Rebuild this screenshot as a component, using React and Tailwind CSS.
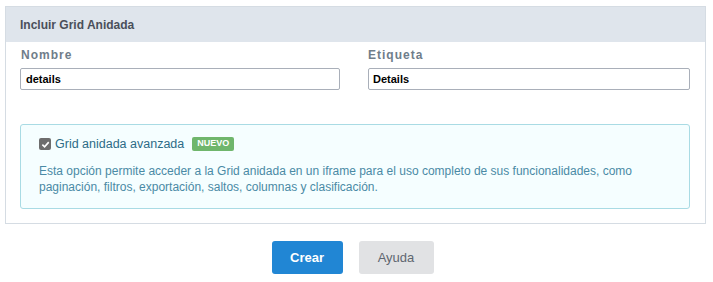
export default function App() {
  return (
    <div className="min-h-screen bg-white pt-[6px] px-[5px] font-['Liberation_Sans',Arial,sans-serif]">
      {/* panel */}
      <div className="w-[701px] border border-[#d5dce3]">
        <div className="h-[35px] bg-[#dfe5ec] flex items-center pl-[14px]">
          <h1 className="text-[12px] font-bold text-[#4a4f5a]">Incluir Grid Anidada</h1>
        </div>

        <div className="px-[14px] pt-[6px] pb-[14px]">
          <div className="flex gap-[28px]">
            <div className="w-[320px]">
              <label className="block text-[12px] font-bold tracking-[1px] text-[#6f7d8a] leading-[14px] ml-px">Nombre</label>
              <input
                defaultValue="details"
                className="mt-[6px] w-[320px] h-[22px] border border-[#a9afb9] rounded-[2px] px-[5px] text-[11px] font-bold text-black outline-none"
              />
            </div>
            <div className="w-[322px]">
              <label className="block text-[12px] font-bold tracking-[1px] text-[#6f7d8a] leading-[14px]">Etiqueta</label>
              <input
                defaultValue="Details"
                className="mt-[6px] w-[322px] h-[22px] border border-[#a9afb9] rounded-[2px] px-[4px] text-[11px] font-bold text-black outline-none"
              />
            </div>
          </div>

          {/* info box */}
          <div className="mt-[34px] w-[670px] bg-[#f5feff] border border-[#a9dbe4] rounded-[3px] pl-[18px] pr-4 pt-[11px] pb-[13px]">
            <div className="flex items-center">
              <span className="w-[12px] h-[12px] rounded-[2px] bg-[#6d6d6d] flex items-center justify-center">
                <svg width="9" height="9" viewBox="0 0 10 10">
                  <path d="M1.5 5.2 L4 7.6 L8.6 2.4" fill="none" stroke="white" strokeWidth="1.8" />
                </svg>
              </span>
              <span className="ml-[4px] text-[12.5px] text-[#2d6c87] leading-[16px]">Grid anidada avanzada</span>
              <span className="ml-[8px] bg-[#6fb66c] text-white text-[9px] font-bold px-[5px] h-[14px] flex items-center rounded-[2px]">NUEVO</span>
            </div>
            <p className="mt-[11px] text-[12px] leading-[16px] text-[#4a8aa5]">
              Esta opción permite acceder a la Grid anidada en un iframe para el uso completo de sus funcionalidades, como paginación, filtros, exportación, saltos, columnas y clasificación.
            </p>
          </div>
        </div>
      </div>

      {/* buttons */}
      <div className="flex justify-center gap-[16px] mt-[17px] ml-[-8px]">
        <button className="w-[71px] h-[33px] rounded-[3px] bg-[#2186d4] text-white text-[13px] font-bold">Crear</button>
        <button className="w-[75px] h-[33px] rounded-[3px] bg-[#e1e2e4] text-[#5f6670] text-[13px]">Ayuda</button>
      </div>
    </div>
  );
}
